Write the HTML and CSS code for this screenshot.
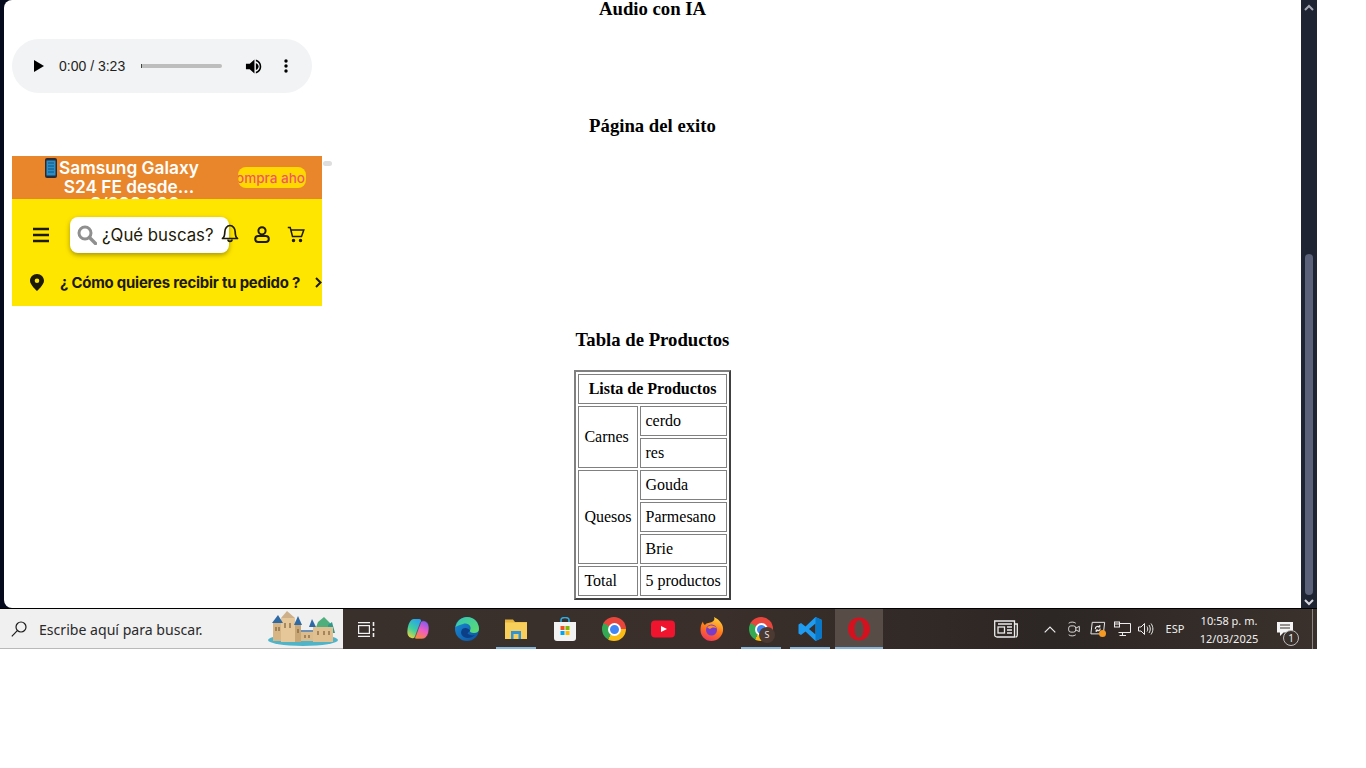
FILE: index.html
```html
<!DOCTYPE html>
<html lang="es">
<head>
    <meta charset="UTF-8">
    <meta name="viewport" content="width=device-width, initial-scale=1.0">
    <title>Página del exito</title>
    <link rel="stylesheet" href="styles.css">
</head>
<body>
<div class="screen">
    <div class="window">
        <main class="page">
            <h3 class="section-title section-title-first">Audio con IA</h3>
            <div class="player">
                <svg class="player-play" viewBox="0 0 10 12"><path d="M0 0L10 6L0 12Z"/></svg>
                <span class="player-time">0:00 / 3:23</span>
                <div class="player-track"><div class="player-knob"></div></div>
                <svg class="player-volume" viewBox="0 0 18 18"><path d="M1 6H5L10 1.5V16.5L5 12H1Z"/><path d="M11.5 5.2C13.3 6 14.4 7.4 14.4 9S13.3 12 11.5 12.8Z"/><path d="M11.5 1.6C15 2.5 17.2 5.4 17.2 9S15 15.5 11.5 16.4V14.6C14 13.8 15.6 11.6 15.6 9S14 4.200 11.5 3.400Z"/></svg>
                <svg class="player-more" viewBox="0 0 4 14"><circle cx="2" cy="2" r="1.700"/><circle cx="2" cy="7" r="1.700"/><circle cx="2" cy="12" r="1.700"/></svg>
            </div>

            <h3 class="section-title">Página del exito</h3>
            <div class="preview-row">
                <div class="preview">
                    <div class="promo">
                        <svg class="promo-phone" viewBox="0 0 12 20"><rect width="12" height="20" rx="2" fill="#2b2b33"/><rect x="1.500" y="2.500" width="9" height="15" fill="#2a8fc9"/><path d="M3 5H9M3 8H9M3 11H9M3 14H9" stroke="#14527c" stroke-width="1"/></svg>
                        <div class="promo-text">
                            <div>Samsung Galaxy</div>
                            <div>S24 FE desde...</div>
                            <div class="promo-price">+S/999.900</div>
                        </div>
                        <div class="promo-button"><span>Compra ahora</span></div>
                    </div>
                    <div class="shop-nav">
                        <svg class="nav-burger" viewBox="0 0 16 16"><path d="M0 2H16M0 8H16M0 14H16" stroke="#1d1a05" stroke-width="2.600"/></svg>
                        <div class="shop-search">
                            <svg class="shop-search-icon" viewBox="0 0 20 20"><circle cx="8" cy="8" r="6" fill="none" stroke="#8f8f8f" stroke-width="3"/><path d="M12.500 12.500L18.500 18.500" stroke="#8f8f8f" stroke-width="3.400" stroke-linecap="round"/></svg>
                            <span>¿Qué buscas?</span>
                        </div>
                        <svg class="nav-bell" viewBox="0 0 18 19" fill="none" stroke="#1d1a05" stroke-width="1.700"><path d="M1.500 14.500C3.500 13 3.800 11 3.800 8C3.800 4.500 6 1.500 9 1.500S14.200 4.500 14.200 8C14.200 11 14.500 13 16.500 14.500Z" stroke-linejoin="round"/><path d="M7 15.500C7 18 11 18 11 15.500"/></svg>
                        <svg class="nav-user" viewBox="0 0 16 17" fill="none" stroke="#1d1a05" stroke-width="2"><circle cx="8" cy="4.800" r="3.600"/><rect x="1.200" y="10" width="13.600" height="6" rx="3"/></svg>
                        <svg class="nav-cart" viewBox="0 0 18 17" fill="none" stroke="#1d1a05" stroke-width="1.500"><path d="M0.800 1.500H3.200L5.500 10.500H14.500L16.800 4H4"/><circle cx="6.500" cy="14.500" r="1" fill="#1d1a05"/><circle cx="13.500" cy="14.500" r="1" fill="#1d1a05"/></svg>
                    </div>
                    <div class="shop-delivery">
                        <svg class="delivery-pin" viewBox="0 0 14 17"><path fill-rule="evenodd" d="M7 0C3 0 0 3 0 6.800C0 11 7 17 7 17S14 11 14 6.800C14 3 11 0 7 0ZM7 4.500A2.300 2.300 0 1 1 7 9.100A2.300 2.300 0 1 1 7 4.500Z" fill="#1d1a05"/></svg>
                        <span class="delivery-text">¿ Cómo quieres recibir tu pedido ?</span>
                        <svg class="delivery-chevron" viewBox="0 0 7 11"><path d="M1 1L5.500 5.500L1 10" fill="none" stroke="#1d1a05" stroke-width="2"/></svg>
                    </div>
                </div>
                <div class="preview-thumb"></div>
            </div>

            <h3 class="section-title">Tabla de Productos</h3>
            <table class="products">
                <tr><th colspan="2">Lista de Productos</th></tr>
                <tr><td rowspan="2">Carnes</td><td>cerdo</td></tr>
                <tr><td>res</td></tr>
                <tr><td rowspan="3">Quesos</td><td>Gouda</td></tr>
                <tr><td>Parmesano</td></tr>
                <tr><td>Brie</td></tr>
                <tr><td>Total</td><td>5 productos</td></tr>
            </table>
        </main>
        <div class="scrollbar">
            <svg class="scroll-arrow" viewBox="0 0 10 7"><path d="M1 6L5 2L9 6" fill="none" stroke="#a4a7b2" stroke-width="2"/></svg>
            <div class="scroll-track"><div class="scroll-thumb"></div></div>
            <svg class="scroll-arrow" viewBox="0 0 10 7"><path d="M1 1L5 5L9 1" fill="none" stroke="#d5d7de" stroke-width="2"/></svg>
        </div>
    </div>

    <footer class="taskbar">
        <div class="task-search">
            <svg class="task-search-icon" viewBox="0 0 16 16" fill="none" stroke="#1c1c1c" stroke-width="1.200"><circle cx="10" cy="6" r="5"/><path d="M6.300 9.700L0.800 15.300"/></svg>
            <span class="task-search-text">Escribe aquí para buscar.</span>
            <svg class="task-castle" viewBox="0 0 72 36">
                <ellipse cx="35" cy="29" rx="35" ry="6" fill="#4fb4c8"/>
                <path d="M46 22L50 11L56 6L62 12L66 22Z" fill="#4fae7c"/>
                <path d="M60 14L64 11L67 22H60Z" fill="#2f9a8c"/>
                <rect x="5" y="12" width="9" height="18" fill="#d8b585"/>
                <rect x="13" y="7" width="14" height="24" fill="#e6c79a"/>
                <rect x="27" y="14" width="6" height="17" fill="#c9a676"/>
                <rect x="33" y="21" width="12" height="9" fill="#dcbb8c"/>
                <rect x="45" y="16" width="20" height="15" fill="#e0bf90"/>
                <path d="M4 12L10 4L15 12Z" fill="#2f6aa5"/>
                <path d="M13 7L19 0L27 7Z" fill="#cdb08a"/>
                <path d="M26 14L30 5L34 14Z" fill="#2f6aa5"/>
                <path d="M41 16L44 8L48 16Z" fill="#2f6aa5"/>
                <path d="M33 19H45V21H33Z" fill="#6f8fb0"/>
                <path d="M8 16V20M11 16V20M17 12V17M22 12V17M30 18V22M50 20V24M56 20V24M61 20V24M37 24V27M41 24V27" stroke="#7c5f3d" stroke-width="1.200"/>
            </svg>
        </div>

        <div class="task-item task-item-first">
            <svg class="task-view" viewBox="0 0 17 15" fill="none" stroke="#f2f2f2" stroke-width="1.200"><path d="M0 0.600H12M0 14.400H12"/><rect x="0.600" y="3.600" width="10.800" height="7.800"/><path d="M15.500 0V4M15.500 6V9M15.500 11V15" stroke-width="1.600"/></svg>
        </div>
        <div class="task-item">
            <svg class="task-icon" viewBox="0 0 24 24">
                <defs>
                    <linearGradient id="copilotA" x1="0.700" y1="0" x2="0.200" y2="1"><stop offset="0" stop-color="#2aa2ee"/><stop offset="0.550" stop-color="#3ecf9e"/><stop offset="1" stop-color="#ecd53a"/></linearGradient>
                    <linearGradient id="copilotB" x1="0.700" y1="0" x2="0.300" y2="1"><stop offset="0" stop-color="#7d5cf0"/><stop offset="0.500" stop-color="#ee5cc4"/><stop offset="1" stop-color="#f78a3c"/></linearGradient>
                </defs>
                <path d="M8 2H13C15 2 15.500 3.500 15 5L11 17C10 20 8 22 5.500 21C2 20 1 17 1.500 13C2 8 4 2 8 2Z" fill="url(#copilotA)"/>
                <path d="M16 4C20 3 23 6 23 11C23 16 21 22 16 22H10C8.500 22 8.500 20.500 9.500 19L14 7C14.500 5 15 4.300 16 4Z" fill="url(#copilotB)" stroke="#3a302c" stroke-width="0.600"/>
            </svg>
        </div>
        <div class="task-item">
            <svg class="task-icon" viewBox="0 0 24 24">
                <defs>
                    <linearGradient id="edgeA" x1="0" y1="0" x2="1" y2="1"><stop offset="0" stop-color="#33c6b8"/><stop offset="1" stop-color="#5fdc6e"/></linearGradient>
                    <linearGradient id="edgeB" x1="0" y1="0" x2="1" y2="1"><stop offset="0" stop-color="#1a8fd8"/><stop offset="1" stop-color="#0c4f9e"/></linearGradient>
                </defs>
                <circle cx="12" cy="12" r="12" fill="url(#edgeB)"/>
                <path d="M0.500 10C2 3.500 7 0 12 0C19 0 24 5.500 24 12C24 14.500 22 16 19 16C16 16 14.500 15 15 13.500C15.500 12 16 11 15 9C14 7 11 6 8 7C4.500 8 2 9 0.500 10Z" fill="url(#edgeA)"/>
                <path d="M15 13.500C13 10.500 8 10 6.500 13.500C5 17 8 21 12.500 21C15.500 21 18 20 20 18C17 19 14 18 12.500 16.500C13.500 15.500 14 14.500 15 13.500Z" fill="#0c3f86"/>
            </svg>
        </div>
        <div class="task-item task-item-open">
            <svg class="task-icon" viewBox="0 0 24 24">
                <path d="M1 2.500H9L11 5H23V8H1Z" fill="#e6b43c"/>
                <rect x="1" y="5.500" width="22" height="16.500" fill="#f7cf5a"/>
                <rect x="7" y="14" width="10" height="8" fill="#2f93d6"/>
                <rect x="9.500" y="17" width="5" height="5" fill="#f7cf5a"/>
            </svg>
        </div>
        <div class="task-item">
            <svg class="task-icon" viewBox="0 0 24 24">
                <path d="M8 6V3C8 1 9.500 0.500 12 0.500S16 1 16 3V6" fill="none" stroke="#2ab0e8" stroke-width="1.500"/>
                <path d="M1 5H23V21C23 23 22 24 20 24H4C2 24 1 23 1 21Z" fill="#f2f2f2"/>
                <rect x="7.500" y="9" width="4" height="4" fill="#f25022"/>
                <rect x="12.500" y="9" width="4" height="4" fill="#7fba00"/>
                <rect x="7.500" y="14" width="4" height="4" fill="#00a4ef"/>
                <rect x="12.500" y="14" width="4" height="4" fill="#ffb900"/>
            </svg>
        </div>
        <div class="task-item"><div class="chrome"><div class="chrome-eye"></div></div></div>
        <div class="task-item">
            <svg class="task-icon" viewBox="0 0 24 24"><rect y="3.500" width="24" height="17" rx="4" fill="#f0142f"/><path d="M10 9L16 12L10 15Z" fill="#fff"/></svg>
        </div>
        <div class="task-item">
            <svg class="task-icon" viewBox="0 0 24 24">
                <defs>
                    <linearGradient id="foxA" x1="0.700" y1="0" x2="0.300" y2="1"><stop offset="0" stop-color="#ffd33d"/><stop offset="0.500" stop-color="#ff7a1a"/><stop offset="1" stop-color="#f0365d"/></linearGradient>
                </defs>
                <path d="M14 0C20 3 24 8 23 14C22 20 17 24 11.500 24C5 24 0.500 19 0.500 13C0.500 10 1 7 3 4.500C3 6.500 4 7.500 5 8C6.500 5.500 10 6 12 5C14 4 15 2 14 0Z" fill="url(#foxA)"/>
                <circle cx="11.500" cy="13" r="5.500" fill="#7b3bc9"/>
                <path d="M7 10C10 7.500 15 8 16.500 11C14 10 11 10.500 10 12C9 11.500 8 11 7 10Z" fill="#ff8f2a"/>
            </svg>
        </div>
        <div class="task-item task-item-open">
            <div class="chrome"><div class="chrome-eye"></div></div>
            <div class="profile-badge">S</div>
        </div>
        <div class="task-item task-item-open">
            <svg class="task-icon" viewBox="0 0 24 24">
                <path fill-rule="evenodd" d="M17.500 0L24 3V21L17.500 24L7.500 14.500L3 18L0.500 16.500V7.500L3 6L7.500 9.500ZM17.500 6.500L11 12L17.500 17.500Z" fill="#1f9cf0"/>
                <path d="M17.500 0L24 3V21L17.500 24Z" fill="#0a78c8"/>
            </svg>
        </div>
        <div class="task-item task-item-open task-item-active">
            <svg class="task-icon" viewBox="0 0 24 24"><path fill-rule="evenodd" d="M12 0.500C18.500 0.500 23 5.500 23 12S18.500 23.500 12 23.500S1 18.500 1 12S5.500 0.500 12 0.500ZM12 3.200C9.300 3.200 7.600 7 7.600 12S9.300 20.800 12 20.800S16.400 17 16.400 12S14.700 3.200 12 3.200Z" fill="#d4121f"/></svg>
        </div>

        <div class="task-news">
            <svg viewBox="0 0 24 18" fill="none" stroke="#ececec" stroke-width="1.300"><path d="M0.700 1H20.500V17H3C1.500 17 0.700 16 0.700 15Z"/><path d="M20.500 4H23.300V15C23.300 16.500 22.500 17 21.500 17"/><rect x="4" y="7" width="6.500" height="6"/><path d="M13 7H18M13 10H18M13 13H18M4 4H18"/></svg>
        </div>
        <div class="tray-item">
            <svg class="tray-chevron" viewBox="0 0 12 7"><path d="M0.700 6.300L6 1L11.300 6.300" fill="none" stroke="#ececec" stroke-width="1.200"/></svg>
        </div>
        <div class="tray-item">
            <svg class="tray-icon" viewBox="0 0 16 18" fill="none" stroke="#ececec" stroke-width="1"><rect x="2" y="5.500" width="8" height="7" rx="2.500"/><path d="M10 8L14 6V12L10 10M2 2.500C4 0.800 8 0.800 10 2.500M2 15.500C4 17.200 8 17.200 10 15.500"/></svg>
        </div>
        <div class="tray-item tray-item-alert">
            <svg class="tray-icon" viewBox="0 0 18 18" fill="none" stroke="#ececec" stroke-width="1.100"><path d="M2.500 1.500H16.500L15 14.500H1Z"/><path d="M6 9C6 6 9 5.500 11 6.500M11 4.500V6.800H8.800M11.500 8.500C11.500 11 9 11.500 7 10.500M7 12.500V10.300H9.200" stroke-width="1.300"/></svg>
            <span class="alert-dot"></span>
        </div>
        <div class="tray-item">
            <svg class="tray-icon tray-icon-wide" viewBox="0 0 17 15" fill="none" stroke="#ececec" stroke-width="1"><path d="M4.500 2H16.500V11H4.500M8.500 11V14M5.500 14H12"/><rect x="0.500" y="0.500" width="5" height="5" fill="#3a302c"/><path d="M0.500 2.500H5.500"/></svg>
        </div>
        <div class="tray-item">
            <svg class="tray-icon" viewBox="0 0 16 14" fill="none" stroke="#ececec" stroke-width="1"><path d="M0.500 5H3L6.500 1.500V12.500L3 9H0.500Z"/><path d="M9 4.500C10 6 10 8 9 9.500M11 3C12.700 5.500 12.700 8.500 11 11M13 1.500C15.500 5 15.500 9 13 12.500"/></svg>
        </div>
        <div class="tray-lang">ESP</div>
        <div class="tray-clock">
            <div>10:58 p. m.</div>
            <div>12/03/2025</div>
        </div>
        <div class="tray-notify">
            <svg class="notify-icon" viewBox="0 0 16 15"><path d="M0 0H16V10.500H6.500L3 14V10.500H0Z" fill="#f5f5f5"/><path d="M3 3H13M3 6H13" stroke="#3a302c" stroke-width="1.200"/></svg>
            <span class="notify-count">1</span>
        </div>
        <div class="show-desktop"></div>
    </footer>
</div>
</body>
</html>
```

FILE: styles.css
```css
body {
    margin: 0;
    background-color: #fff;
    font-family: "Liberation Serif", serif;
    color: #000;
}
.screen {
    width: 1317px;
    height: 649px;
    display: flex;
    flex-direction: column;
    overflow: hidden;
}
.window {
    height: 609px;
    display: flex;
    flex-shrink: 0;
    box-sizing: border-box;
    padding-left: 4px;
    background-color: #050a1c;
    border-bottom: 1px solid #000;
}
.page {
    flex: 1;
    padding: 0 8px;
    background-color: #fff;
    border-radius: 8px 0 0 8px;
    overflow: hidden;
}
.section-title {
    margin: 22px 0 20px;
    font-size: 18.72px;
    line-height: 21px;
    text-align: center;
}
.section-title-first {
    margin-top: -2px;
}

/* audio */
.player {
    width: 300px;
    height: 54px;
    display: flex;
    align-items: center;
    background-color: #f1f3f4;
    border-radius: 27px;
    font-family: "Liberation Sans", Arial, sans-serif;
}
.player-play {
    width: 10px;
    height: 12px;
    margin-left: 22px;
}
.player-time {
    margin-left: 15px;
    font-size: 14px;
    color: #1f1f1f;
}
.player-track {
    width: 81px;
    height: 4px;
    margin-left: 16px;
    background-color: #bdbdbd;
    border-radius: 2px;
}
.player-knob {
    width: 1px;
    height: 4px;
    background-color: #444;
}
.player-volume {
    width: 17px;
    height: 17px;
    margin-left: 23px;
}
.player-more {
    width: 4px;
    height: 14px;
    margin-left: 22px;
}

/* imagen de la tienda */
.preview-row {
    display: flex;
    gap: 1px;
    padding-bottom: 1px;
}
.preview {
    width: 310px;
    height: 150px;
    font-family: Inter, "Noto Sans", sans-serif;
    overflow: hidden;
    color: #1d1a05;
}
.preview-thumb {
    width: 9px;
    height: 5px;
    margin-top: 5px;
    background-color: #dedede;
    border-radius: 3px;
}
.promo {
    height: 43px;
    display: flex;
    background-color: #e9862b;
    overflow: hidden;
}
.promo-phone {
    width: 12px;
    height: 20px;
    margin: 2px 0 0 33px;
    flex-shrink: 0;
}
.promo-text {
    width: 142px;
    flex-shrink: 0;
    padding-top: 2px;
    margin-left: 1px;
    color: #fff;
    font-size: 17.300px;
    font-weight: 600;
    line-height: 19px;
    text-align: center;
}
.promo-price {
    margin-top: -2px;
}
.promo-button {
    width: 68px;
    height: 21px;
    margin: 11px 0 0 38px;
    display: flex;
    justify-content: center;
    background-color: #ffd800;
    border-radius: 8px;
    overflow: hidden;
    color: #f0566a;
    font-size: 13.500px;
    font-weight: 500;
    line-height: 22px;
    white-space: nowrap;
}
.promo-button span {
    flex-shrink: 0;
}
.shop-nav {
    height: 71px;
    display: flex;
    align-items: center;
    background-color: #ffe600;
    padding-left: 21px;
}
.nav-burger {
    width: 16px;
    height: 16px;
}
.shop-search {
    width: 159px;
    height: 36px;
    margin-left: 21px;
    box-sizing: border-box;
    padding-left: 7px;
    display: flex;
    align-items: center;
    gap: 5px;
    background-color: #fff;
    border-radius: 8px;
    box-shadow: 0 2px 5px rgba(0, 0, 0, 0.35);
    font-size: 16.800px;
    white-space: nowrap;
}
.shop-search-icon {
    width: 20px;
    height: 20px;
    flex-shrink: 0;
}
.nav-bell {
    width: 18px;
    height: 19px;
    margin: -2px 0 0 -8px;
    position: relative;
}
.nav-user {
    width: 16px;
    height: 17px;
    margin-left: 15px;
}
.nav-cart {
    width: 18px;
    height: 17px;
    margin-left: 17px;
}
.shop-delivery {
    height: 36px;
    box-sizing: border-box;
    display: flex;
    align-items: flex-start;
    background-color: #ffe600;
    padding: 4px 0 0 18px;
}
.delivery-pin {
    width: 14px;
    height: 17px;
}
.delivery-text {
    margin-left: 16px;
    font-size: 14.900px;
    font-weight: 700;
    line-height: 18px;
    white-space: nowrap;
    letter-spacing: -0.2px;
}
.delivery-chevron {
    width: 7px;
    height: 11px;
    margin: 3px 0 0 auto;
}

/* tabla */
.products {
    margin: 0 auto;
    border-collapse: separate;
    border-spacing: 2px;
    border-style: solid;
    border-width: 2px;
    border-color: #808080 #404040 #404040 #808080;
    font-size: 16px;
}
.products th,
.products td {
    padding: 5px;
    border: 1px solid #808080;
    line-height: 18px;
    text-align: left;
}
.products th {
    text-align: center;
}

/* scrollbar */
.scrollbar {
    width: 16px;
    display: flex;
    flex-direction: column;
    align-items: center;
    background-color: #1f2433;
}
.scroll-arrow {
    width: 10px;
    height: 7px;
    margin: 4px 0;
    flex-shrink: 0;
}
.scroll-track {
    flex: 1;
    width: 8px;
}
.scroll-thumb {
    height: 341px;
    margin-top: 239px;
    background-color: #5b6178;
    border-radius: 4px;
}

/* barra de tareas */
.taskbar {
    flex: 1;
    display: flex;
    background: linear-gradient(90deg, #38312e 0%, #3a2f2a 55%, #2c2624 80%, #3a312c 100%);
    font-family: "Noto Sans", "Open Sans", sans-serif;
    color: #f0f0f0;
}
.task-search {
    width: 343px;
    flex-shrink: 0;
    box-sizing: border-box;
    display: flex;
    align-items: center;
    background-color: #f0f0f0;
    border-bottom: 1px solid #b9b9b9;
    padding-left: 11px;
}
.task-search-icon {
    width: 16px;
    height: 16px;
}
.task-search-text {
    margin: 1px 0 0 12px;
    font-size: 14.100px;
    color: #2a2a2a;
    white-space: nowrap;
}
.task-castle {
    width: 72px;
    height: 36px;
    margin-left: auto;
    margin-right: 3px;
}
.task-item {
    position: relative;
    width: 49px;
    flex-shrink: 0;
    box-sizing: border-box;
    padding-right: 1px;
    display: flex;
    align-items: center;
    justify-content: center;
}
.task-item-first {
    width: 51px;
    padding-right: 5px;
}
.task-item-open::after {
    content: "";
    position: absolute;
    left: 4px;
    right: 5px;
    bottom: 0;
    height: 2px;
    background-color: #86b4d8;
}
.task-item-active {
    width: 48px;
    padding-right: 0;
    background-color: #584c47;
}
.task-item-active::after {
    left: 0;
    right: 0;
}
.task-view {
    width: 17px;
    height: 15px;
}
.task-icon {
    width: 24px;
    height: 24px;
}
.chrome {
    width: 24px;
    height: 24px;
    display: flex;
    align-items: center;
    justify-content: center;
    border-radius: 50%;
    background: conic-gradient(#e8453c 0 90deg, #f9bc15 90deg 210deg, #34a853 210deg 300deg, #e8453c 300deg 360deg);
}
.chrome-eye {
    width: 9px;
    height: 9px;
    background-color: #4285f4;
    border: 2px solid #fff;
    border-radius: 50%;
}
.profile-badge {
    position: absolute;
    left: 22px;
    top: 18px;
    width: 16px;
    height: 16px;
    background-color: #4a3a33;
    border-radius: 50%;
    font-size: 9px;
    line-height: 16px;
    text-align: center;
    color: #e6e6e6;
}
.task-news {
    width: 24px;
    margin-left: auto;
    margin-right: 20px;
    display: flex;
    align-items: center;
}
.task-news svg {
    width: 24px;
    height: 18px;
}
.tray-item {
    position: relative;
    width: 24px;
    display: flex;
    align-items: center;
    justify-content: center;
}
.tray-chevron {
    width: 12px;
    height: 7px;
}
.tray-icon {
    width: 16px;
    height: 16px;
}
.tray-icon-wide {
    width: 17px;
}
.alert-dot {
    position: absolute;
    left: 13px;
    top: 21px;
    width: 7px;
    height: 7px;
    background-color: #f59a23;
    border-radius: 50%;
}
.tray-lang {
    width: 34px;
    font-size: 11px;
    line-height: 40px;
    text-align: center;
}
.tray-clock {
    width: 74px;
    padding-top: 3px;
    font-size: 11px;
    line-height: 18px;
    text-align: center;
}
.tray-notify {
    position: relative;
    width: 46px;
    display: flex;
    align-items: center;
    padding-left: 11px;
    box-sizing: border-box;
}
.notify-icon {
    width: 16px;
    height: 15px;
}
.notify-count {
    position: absolute;
    left: 17px;
    top: 21px;
    width: 14px;
    height: 14px;
    border: 1px solid #bcbcbc;
    border-radius: 50%;
    background-color: #3a302c;
    font-size: 10px;
    line-height: 14px;
    text-align: center;
}
.show-desktop {
    width: 5px;
    border-left: 1px solid #8b8683;
    box-sizing: border-box;
}
```
